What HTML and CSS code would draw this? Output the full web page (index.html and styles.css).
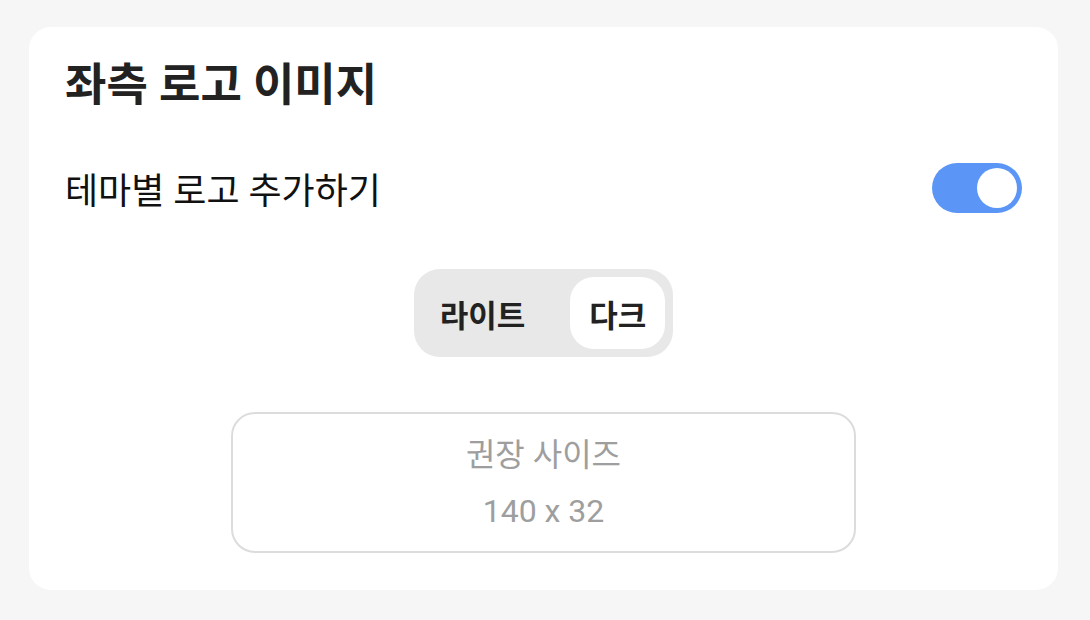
FILE: index.html
```html
<!DOCTYPE html>
<html lang="ko">
<head>
<meta charset="utf-8">
<link rel="stylesheet" href="styles.css">
</head>
<body>
<div class="card">
  <h1 class="title">좌측 로고 이미지</h1>
  <div class="row">
    <span class="label">테마별 로고 추가하기</span>
    <span class="switch"><span class="knob"></span></span>
  </div>
  <div class="seg-wrap">
    <div class="seg">
      <span class="seg-item">라이트</span>
      <span class="seg-item active">다크</span>
    </div>
  </div>
  <div class="drop">
    <div class="drop-line">권장 사이즈</div>
    <div class="drop-line">140 x 32</div>
  </div>
</div>
</body>
</html>
```
FILE: styles.css
```css
html, body {
  margin: 0;
  padding: 0;
  background: #f6f6f6;
}
body {
  font-family: "Roboto", "Noto Sans CJK KR", sans-serif;
  color: #222;
  padding: 27px 32px 30px 29px;
}
.card {
  background: #fff;
  border-radius: 22px;
  height: 563px;
  box-sizing: border-box;
  padding: 29px 36px 0 36px;
}
.title {
  margin: 0;
  font-size: 45px;
  font-weight: 700;
  line-height: 60px;
  color: #222;
}
.row {
  display: flex;
  align-items: center;
  justify-content: space-between;
  margin-top: 47px;
  height: 50px;
}
.label {
  font-size: 36px;
  color: #111;
}
.switch {
  width: 90px;
  height: 50px;
  border-radius: 25px;
  background: #5b96f7;
  display: flex;
  align-items: center;
  justify-content: flex-end;
  padding: 0 5px;
  box-sizing: border-box;
}
.knob {
  width: 40px;
  height: 40px;
  border-radius: 50%;
  background: #fff;
}
.seg-wrap {
  display: flex;
  justify-content: center;
  margin-top: 56px;
}
.seg {
  display: flex;
  background: #e8e8e8;
  border-radius: 26px;
  padding: 8px;
  gap: 24px;
}
.seg-item {
  height: 72px;
  display: flex;
  align-items: center;
  justify-content: center;
  font-size: 31px;
  font-weight: 700;
  color: #222;
  padding: 0 21px 0 18px;
  border-radius: 24px;
}
.seg-item.active {
  background: #fff;
  padding: 0 19px;
}
.drop {
  width: 625px;
  height: 141px;
  box-sizing: border-box;
  margin: 55px auto 0;
  border: 2px solid #dcdcdc;
  border-radius: 24px;
  display: flex;
  flex-direction: column;
  align-items: center;
  justify-content: center;
  gap: 20px;
  color: #9e9e9e;
  font-size: 32px;
}
.drop-line {
  line-height: 36px;
}
```
